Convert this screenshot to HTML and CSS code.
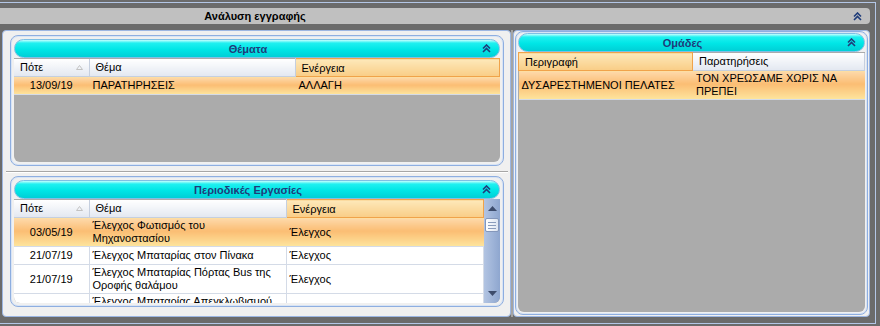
FILE: index.html
```html
<!DOCTYPE html>
<html lang="el">
<head>
    <meta charset="UTF-8">
    <title>Ανάλυση εγγραφής</title>
    <link rel="stylesheet" href="styles.css">
</head>
<body>
<div class="window">
    <div class="frame">

        <div class="titlebar">
            <span class="title">Ανάλυση εγγραφής</span>
            <svg class="chev" width="9" height="9" viewBox="0 0 9 9"><path d="M1 4.5L4.5 1L8 4.5M1 8L4.5 4.5L8 8"/></svg>
        </div>

        <div class="content">

            <!-- left side: topics + periodic tasks -->
            <div class="panel left">

                <section class="group g-topics">
                    <div class="group-head">
                        <span>Θέματα</span>
                        <svg class="chev" width="9" height="9" viewBox="0 0 9 9"><path d="M1 4.5L4.5 1L8 4.5M1 8L4.5 4.5L8 8"/></svg>
                    </div>
                    <div class="grid-wrap">
                        <div class="grid-body">
                            <table class="grid">
                                <colgroup><col style="width:75px"><col style="width:206px"><col></colgroup>
                                <tr>
                                    <th>Πότε<svg class="sort" width="7" height="5" viewBox="0 0 7 5"><path d="M0.5 4.5L3.5 0.5L6.5 4.5Z"/></svg></th>
                                    <th>Θέμα</th>
                                    <th class="hot">Ενέργεια</th>
                                </tr>
                                <tr class="sel">
                                    <td class="date">13/09/19</td>
                                    <td>ΠΑΡΑΤΗΡΗΣΕΙΣ</td>
                                    <td>ΑΛΛΑΓΗ</td>
                                </tr>
                            </table>
                        </div>
                    </div>
                </section>

                <div class="hsplit"></div>

                <section class="group g-periodic">
                    <div class="group-head">
                        <span>Περιοδικές Εργασίες</span>
                        <svg class="chev" width="9" height="9" viewBox="0 0 9 9"><path d="M1 4.5L4.5 1L8 4.5M1 8L4.5 4.5L8 8"/></svg>
                    </div>
                    <div class="grid-wrap">
                        <div class="grid-body">
                            <table class="grid">
                                <colgroup><col style="width:75px"><col style="width:197px"><col></colgroup>
                                <tr>
                                    <th>Πότε<svg class="sort" width="7" height="5" viewBox="0 0 7 5"><path d="M0.5 4.5L3.5 0.5L6.5 4.5Z"/></svg></th>
                                    <th>Θέμα</th>
                                    <th class="hot">Ενέργεια</th>
                                </tr>
                                <tr class="sel">
                                    <td class="date">03/05/19</td>
                                    <td>Έλεγχος Φωτισμός του Μηχανοστασίου</td>
                                    <td>Έλεγχος</td>
                                </tr>
                                <tr>
                                    <td class="date">21/07/19</td>
                                    <td>Έλεγχος Μπαταρίας στον Πίνακα</td>
                                    <td>Έλεγχος</td>
                                </tr>
                                <tr>
                                    <td class="date">21/07/19</td>
                                    <td>Έλεγχος Μπαταρίας Πόρτας Bus της Οροφής θαλάμου</td>
                                    <td>Έλεγχος</td>
                                </tr>
                                <tr>
                                    <td class="date">21/07/19</td>
                                    <td>Έλεγχος Μπαταρίας Απεγκλωβισμού Ανελκυστήρα</td>
                                    <td>Έλεγχος</td>
                                </tr>
                            </table>
                        </div>
                        <div class="scrollbar">
                            <div class="sb-btn"><svg width="9" height="5" viewBox="0 0 9 5"><path d="M0 5L4.5 0L9 5Z"/></svg></div>
                            <div class="sb-thumb"></div>
                            <div class="sb-track"></div>
                            <div class="sb-btn"><svg width="9" height="5" viewBox="0 0 9 5"><path d="M0 0L4.5 5L9 0Z"/></svg></div>
                        </div>
                    </div>
                </section>
            </div>

            <div class="vsplit"></div>

            <!-- right side: groups -->
            <div class="panel right">
                <section class="group g-groups">
                    <div class="group-head">
                        <span>Ομάδες</span>
                        <svg class="chev" width="9" height="9" viewBox="0 0 9 9"><path d="M1 4.5L4.5 1L8 4.5M1 8L4.5 4.5L8 8"/></svg>
                    </div>
                    <div class="grid-wrap">
                        <div class="grid-body">
                            <table class="grid">
                                <colgroup><col style="width:174px"><col></colgroup>
                                <tr>
                                    <th class="hot">Περιγραφή</th>
                                    <th>Παρατηρήσεις</th>
                                </tr>
                                <tr class="sel">
                                    <td>ΔΥΣΑΡΕΣΤΗΜΕΝΟΙ ΠΕΛΑΤΕΣ</td>
                                    <td>ΤΟΝ ΧΡΕΩΣΑΜΕ ΧΩΡΙΣ ΝΑ ΠΡΕΠΕΙ</td>
                                </tr>
                            </table>
                        </div>
                    </div>
                </section>
            </div>

        </div>
    </div>
</div>
</body>
</html>
```

FILE: styles.css
```css
:root {
    --frame: #6b6b6b;
    --frame-line: #b3c6e6;
    --panel: #f0f0f0;
    --panel-line: #9cb6e2;
    --navy: #1f3c7a;
    --empty: #ababab;
    --grid-line: #d4dbe7;
    --orange-line: #f0a34a;
}

* {
    margin: 0;
    box-sizing: border-box;
}

body {
    background-color: var(--frame);
    font-family: "Liberation Sans", Arial, sans-serif;
    font-size: 11px;
    color: #000;
}

.window {
    width: 880px;
    height: 326px;
    padding: 2px 4px 2px 0;
}

.frame {
    height: 100%;
    border: 1px solid var(--frame-line);
    border-left: none;
    padding: 5px 5px 6px 0;
    display: flex;
    flex-direction: column;
    gap: 6px;
}

/* top caption bar */
.titlebar {
    height: 16px;
    background-color: #c0c0c0;
    border-radius: 0 4px 4px 0;
    display: flex;
    align-items: center;
}

.title {
    width: 510px;
    text-align: center;
    font-weight: bold;
}

.chev {
    flex: none;
}

.chev path {
    fill: none;
    stroke: var(--navy);
    stroke-width: 1.6;
}

.titlebar .chev {
    margin-left: auto;
    margin-right: 8px;
}

.content {
    flex: 1;
    display: flex;
    min-height: 0;
}

.panel {
    border: 1px solid var(--panel-line);
    border-radius: 4px;
    background-color: var(--panel);
    display: flex;
    flex-direction: column;
}

.panel.left {
    width: 509px;
    margin-left: 2px;
    padding: 4px 6px 9px 7px;
}

.panel.right {
    flex: 1;
    padding: 0 1px 1px 1px;
}

.vsplit {
    width: 2px;
    background-color: #a4a4a4;
}

.hsplit {
    height: 10px;
    margin: 0 -4px;
    position: relative;
}

.hsplit::after {
    content: "";
    display: block;
    margin-top: 5px;
    height: 1px;
    background-color: #a6a6a6;
    box-shadow: 0 1px 0 #fff;
}

/* group boxes */
.group {
    border: 1px solid #8eaee0;
    border-radius: 8px;
    padding: 3px;
    display: flex;
    flex-direction: column;
    box-shadow: inset 0 0 0 1px #d8e4f5;
    min-height: 0;
}

.g-topics {
    height: 131px;
    flex: none;
}

.g-periodic {
    flex: 1;
}

.g-groups {
    flex: 1;
    padding: 1px 2px 2px;
}

.group-head {
    height: 19px;
    flex: none;
    border: 1px solid #7fbfe4;
    border-radius: 10px;
    background: linear-gradient(#c4ffff 0, #1ff0f0 18%, #00e6e6 55%, #00cfd6 100%);
    display: flex;
    align-items: center;
    font-weight: bold;
    color: var(--navy);
}

.group-head span {
    flex: 1;
    text-align: center;
}

.group-head .chev {
    width: 18px;
    padding-right: 7px;
}

.grid-wrap {
    flex: 1;
    background-color: var(--empty);
    border-radius: 0 0 6px 6px;
    overflow: hidden;
    display: flex;
    min-height: 0;
}

.grid-body {
    flex: 1;
    overflow: hidden;
}

.grid {
    width: 100%;
    border-collapse: collapse;
    table-layout: fixed;
}

.grid tr {
    height: 18px;
}

.grid th {
    height: 18px;
    padding: 0 6px;
    font-weight: normal;
    text-align: left;
    white-space: nowrap;
    background: linear-gradient(#ffffff, #e3e8f1);
    border-right: 1px solid #c5cfdf;
    border-bottom: 1px solid #c5cfdf;
}

.grid th.hot {
    background: linear-gradient(#fde8b9, #f9cd86);
    border: 1px solid var(--orange-line);
}

.sort {
    float: right;
    margin-top: 4px;
}

.sort path {
    fill: none;
    stroke: #c2c2c2;
}

.grid td {
    padding: 1px 3px;
    line-height: 13px;
    background-color: #fff;
    border-right: 1px solid var(--grid-line);
    border-bottom: 1px solid var(--grid-line);
    vertical-align: middle;
}

.grid td.date {
    text-align: center;
}

.grid tr.sel td {
    background: linear-gradient(#fdd9aa, #fbbd73 45%, #fde59e);
    border-right-color: transparent;
}

/* vertical scrollbar of the periodic grid */
.scrollbar {
    width: 16px;
    flex: none;
    display: flex;
    flex-direction: column;
    background: linear-gradient(90deg, #b2c4e2, #8ea6cf);
}

.sb-btn {
    height: 19px;
    display: flex;
    align-items: center;
    justify-content: center;
}

.sb-btn path {
    fill: #3d4c6c;
}

.sb-thumb {
    height: 14px;
    margin: 0 1px;
    border: 1px solid #8497bb;
    border-radius: 2px;
    background:
        repeating-linear-gradient(#8a9cbc 0 1px, transparent 1px 3px) center / 8px 7px no-repeat,
        linear-gradient(90deg, #ffffff, #dde5f1);
}

.sb-track {
    flex: 1;
}
```
